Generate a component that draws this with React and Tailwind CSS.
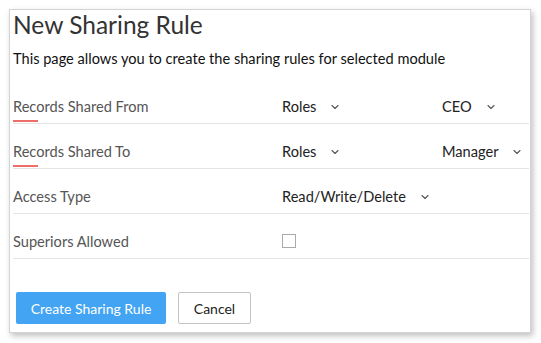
import { ChevronDown } from 'lucide-react'

const rows = [
  { label: 'Records Shared From', required: true, value: 'Roles', extra: 'CEO' },
  { label: 'Records Shared To', required: true, value: 'Roles', extra: 'Manager' },
  { label: 'Access Type', value: 'Read/Write/Delete' },
  { label: 'Superiors Allowed', checkbox: true },
]

function Select({ text }) {
  return (
    <div className="flex items-center gap-[13px] text-[14.6px] text-[#222]">
      <span>{text}</span>
      <ChevronDown size={12} strokeWidth={2.2} className="text-[#555]" />
    </div>
  )
}

export default function App() {
  return (
    <div className="min-h-screen bg-white p-[9px] pr-[10px]" style={{ fontFamily: 'Lato, "Open Sans", sans-serif' }}>
      <div className="w-[522px] h-[324px] bg-white border border-[#d4d4d4] shadow-[2px_3px_6px_rgba(0,0,0,0.25)] flex flex-col pl-[3px]">
        <h1 className="text-[24.5px] leading-[30px] text-[#333] font-normal">New Sharing Rule</h1>
        <p className="mt-[9px] text-[14.6px] leading-[20px] text-[#111]">
          This page allows you to create the sharing rules for selected module
        </p>

        <div className="mt-[10px] flex flex-col">
          {rows.map(r => (
            <div key={r.label} className="relative h-[45px] border-b border-[#e4e4e4] flex items-start pt-[18px] mr-[1px]">
              <div className="w-[269px] text-[14.6px] leading-[20px] text-[#555]">{r.label}</div>
              <div className="w-[160px] leading-[20px]">
                {r.checkbox
                  ? <div className="w-[14px] h-[14px] border border-[#aaa] mt-[2px] bg-white" />
                  : <Select text={r.value} />}
              </div>
              {r.extra && <div className="leading-[20px]"><Select text={r.extra} /></div>}
              {r.required && <div className="absolute left-0 bottom-[1px] w-[25px] h-[2px] bg-[#ee6f6a]" />}
            </div>
          ))}
        </div>

        <div className="mt-[33px] flex gap-[12px] pl-[3px]">
          <button className="w-[150px] h-[32px] rounded-[2px] bg-[#42a4f2] text-white text-[14px]">
            Create Sharing Rule
          </button>
          <button className="w-[73px] h-[32px] rounded-[2px] bg-white border border-[#c4c4c4] text-[#222] text-[14px]">
            Cancel
          </button>
        </div>
      </div>
    </div>
  )
}
